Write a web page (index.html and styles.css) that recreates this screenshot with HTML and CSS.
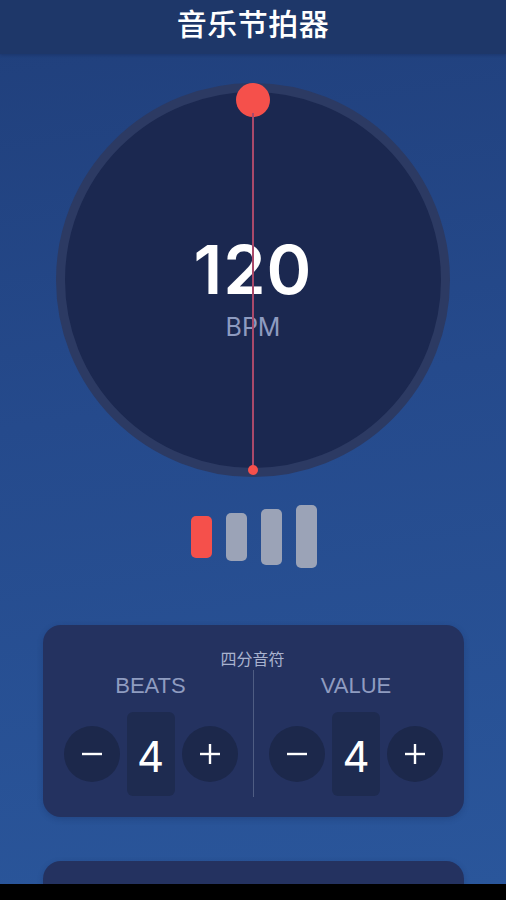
FILE: index.html
```html
<!DOCTYPE html>
<html lang="zh">
<head>
<meta charset="utf-8">
<title>音乐节拍器</title>
<link rel="stylesheet" href="styles.css">
</head>
<body>
<div class="screen">
  <header class="header">音乐节拍器</header>
  <div class="dial">
    <div class="tempo">
      <div class="bpm-value">120</div>
      <div class="bpm-label">BPM</div>
    </div>
    <div class="pendulum">
      <span class="pendulum-head"></span>
      <span class="pendulum-rod"></span>
      <span class="pendulum-pivot"></span>
    </div>
  </div>
  <div class="beats">
    <span class="beat beat-1 active"></span>
    <span class="beat beat-2"></span>
    <span class="beat beat-3"></span>
    <span class="beat beat-4"></span>
  </div>
  <section class="card signature">
    <div class="note-name">四分音符</div>
    <div class="sig-row">
      <div class="sig-col">
        <div class="sig-label">BEATS</div>
        <div class="stepper">
          <button class="step-btn" aria-label="minus"><svg width="24" height="24" viewBox="0 0 24 24"><line x1="2" y1="12" x2="22" y2="12"/></svg></button>
          <div class="step-value">4</div>
          <button class="step-btn" aria-label="plus"><svg width="24" height="24" viewBox="0 0 24 24"><line x1="2" y1="12" x2="22" y2="12"/><line x1="12" y1="2" x2="12" y2="22"/></svg></button>
        </div>
      </div>
      <div class="sig-divider"></div>
      <div class="sig-col">
        <div class="sig-label">VALUE</div>
        <div class="stepper">
          <button class="step-btn" aria-label="minus"><svg width="24" height="24" viewBox="0 0 24 24"><line x1="2" y1="12" x2="22" y2="12"/></svg></button>
          <div class="step-value">4</div>
          <button class="step-btn" aria-label="plus"><svg width="24" height="24" viewBox="0 0 24 24"><line x1="2" y1="12" x2="22" y2="12"/><line x1="12" y1="2" x2="12" y2="22"/></svg></button>
        </div>
      </div>
    </div>
  </section>
  <section class="card second"></section>
</div>
<div class="navbar"></div>
</body>
</html>
```

FILE: styles.css
```css
* { box-sizing: border-box; }
html, body { margin: 0; padding: 0; }
body {
  width: 506px;
  height: 900px;
  overflow: hidden;
  background: #000;
  font-family: Inter, "Noto Sans", "Noto Sans CJK SC", sans-serif;
  color: #fff;
}
.screen {
  height: 884px;
  overflow: hidden;
  display: flex;
  flex-direction: column;
  align-items: center;
  background: linear-gradient(172deg, #203f7b 0%, #254a8c 45%, #2a569b 100%);
}
.header {
  width: 100%;
  height: 54px;
  flex: none;
  background: #1e3769;
  text-align: center;
  font-family: "Noto Sans CJK SC", sans-serif;
  font-size: 30px;
  font-weight: 500;
  line-height: 44px;
  letter-spacing: 0.5px;
  box-shadow: 0 1px 3px rgba(10, 20, 50, 0.25);
}
.dial {
  position: relative;
  flex: none;
  margin-top: 29px;
  width: 394px;
  height: 394px;
  border-radius: 50%;
  border: 9px solid #2c3a63;
  background: #1b2850;
  display: flex;
  align-items: center;
  justify-content: center;
}
.tempo {
  display: flex;
  flex-direction: column;
  align-items: center;
  margin-top: 16px;
}
.bpm-value {
  font-size: 68px;
  font-weight: 600;
  line-height: 70px;
  letter-spacing: 1px;
}
.bpm-label {
  font-size: 25px;
  font-weight: 400;
  line-height: 30px;
  margin-top: 8px;
  color: #8e9bc0;
}
.pendulum {
  position: absolute;
  left: 50%;
  top: -9px;
  width: 34px;
  margin-left: -17px;
  height: 398px;
}
.pendulum-head {
  position: absolute;
  left: 0;
  top: 0;
  width: 34px;
  height: 34px;
  border-radius: 50%;
  background: #f5504b;
}
.pendulum-rod {
  position: absolute;
  left: 16px;
  top: 30px;
  width: 2px;
  height: 356px;
  background: #a9496a;
}
.pendulum-pivot {
  position: absolute;
  left: 12px;
  top: 382px;
  width: 10px;
  height: 10px;
  border-radius: 50%;
  background: #f5504b;
}
.beats {
  flex: none;
  margin-top: 28px;
  height: 63px;
  display: flex;
  align-items: center;
  gap: 14px;
  margin-left: 1px;
}
.beat {
  width: 21px;
  border-radius: 5px;
  background: #9ba3b7;
}
.beat.active { background: #f5504b; }
.beat-1 { height: 42px; }
.beat-2 { height: 48px; }
.beat-3 { height: 56px; }
.beat-4 { height: 63px; }
.card {
  flex: none;
  width: 421px;
  border-radius: 18px;
  background: #243260;
  box-shadow: 0 2px 6px rgba(15, 25, 60, 0.2);
}
.signature {
  margin-top: 57px;
  height: 192px;
  padding: 23px 20px 20px 21px;
  display: flex;
  flex-direction: column;
}
.note-name {
  text-align: center;
  font-family: "Noto Sans CJK SC", sans-serif;
  font-size: 16px;
  line-height: 20px;
  color: #a9b3cf;
  margin-left: -2px;
}
.sig-row {
  margin-top: 2px;
  display: grid;
  grid-template-columns: 174px 1px 175px;
  column-gap: 15px;
}
.sig-col {
  display: flex;
  flex-direction: column;
  align-items: center;
}
.sig-label {
  margin-top: 3px;
  font-family: "Liberation Sans", Arial, sans-serif;
  font-size: 22px;
  font-weight: 400;
  line-height: 26px;
  color: #8f9cc0;
}
.stepper {
  margin-top: 13px;
  display: flex;
  align-items: center;
  gap: 7px;
}
.step-btn {
  width: 56px;
  height: 56px;
  border: none;
  padding: 0;
  border-radius: 50%;
  background: #1c284b;
  display: flex;
  align-items: center;
  justify-content: center;
}
.step-btn svg line {
  stroke: #ffffff;
  stroke-width: 2.4;
}
.step-value {
  width: 48px;
  height: 84px;
  border-radius: 6px;
  background: #1e2b50;
  display: flex;
  align-items: center;
  justify-content: center;
  font-size: 42px;
  font-weight: 400;
  padding-top: 4px;
}
.sig-divider {
  width: 1px;
  height: 127px;
  background: #4f5d83;
}
.second {
  margin-top: 44px;
  height: 80px;
}
.navbar {
  height: 16px;
  background: #000;
}
```
